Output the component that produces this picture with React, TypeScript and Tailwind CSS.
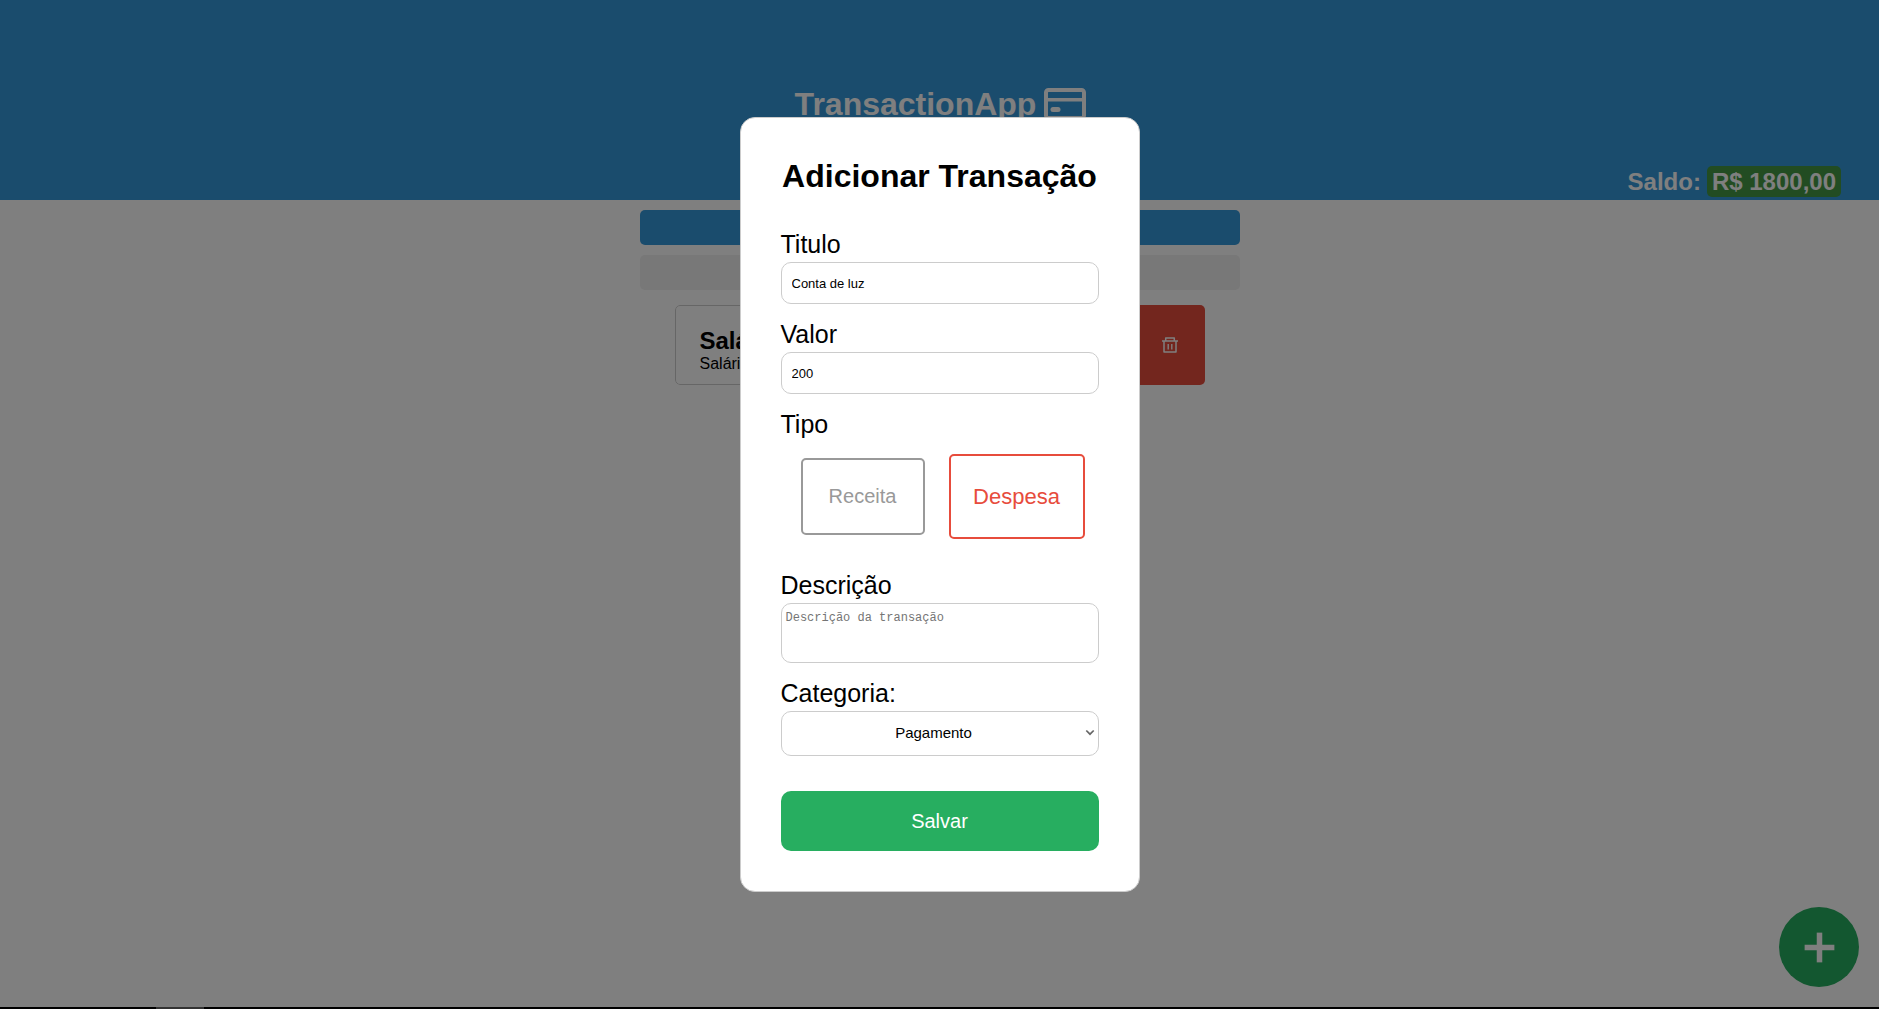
import { useState } from "react";
import { Plus } from "lucide-react";

const inputClass =
  "block w-full rounded-[10px] border border-[#ccc] bg-white";

const labelClass = "block text-[25px] leading-7";

function CardIcon() {
  return (
    <svg width="42" height="32" viewBox="0 0 42 32" fill="none" aria-hidden="true">
      <rect x="2" y="2" width="38" height="28" rx="2.5" stroke="white" strokeWidth="4" />
      <path d="M2 11.7H40" stroke="white" strokeWidth="3.6" />
      <path d="M9 21.5H14" stroke="white" strokeWidth="5" strokeLinecap="round" />
    </svg>
  );
}

function TrashIcon() {
  return (
    <svg width="16" height="16" viewBox="0 0 16 16" fill="none" stroke="white" aria-hidden="true">
      <path d="M0 4H16M3.7 4V1H12.3V4M2 4V15H14V4" strokeWidth="1.5" strokeLinejoin="round" />
      <path d="M6.2 7V12.5M9.8 7V12.5" strokeWidth="1.4" />
    </svg>
  );
}

function Page() {
  return (
    <>
      <header className="flex h-[200px] flex-col justify-end bg-[#3498db] text-white">
        <h1 className="flex items-center justify-center gap-2 pb-[42px] pl-[2px] text-[32px] leading-9 font-bold">
          TransactionApp
          <CardIcon />
        </h1>
        <p className="flex h-9 items-center justify-end gap-[6px] pr-[38px] pb-[1px] text-2xl font-bold">
          Saldo:
          <span className="rounded-[5px] bg-[#449944] px-[5px] py-[2px] leading-[27px]">R$ 1800,00</span>
        </p>
      </header>
      <main className="mx-auto flex w-full max-w-[600px] flex-col gap-[10px] pt-[10px]">
        <div className="h-[35px] rounded-[5px] bg-[#3498db]" />
        <div className="h-[35px] rounded-[5px] bg-[#f0f0f0]" />
        <article className="mx-[35px] mt-[5px] flex h-20 overflow-hidden rounded-[5px]">
          <div className="flex-1 rounded-l-[5px] border border-[#ccc] pt-5 pl-6">
            <h2 className="text-2xl leading-[29px] font-bold">Salário</h2>
            <p className="text-base leading-[18px]">Salário</p>
          </div>
          <button type="button" aria-label="Excluir" className="flex w-[70px] items-center justify-center bg-[#e74c3c]">
            <TrashIcon />
          </button>
        </article>
      </main>
      <button
        type="button"
        aria-label="Adicionar"
        className="fixed right-5 bottom-[22px] flex size-20 items-center justify-center rounded-full bg-[#27ae60] text-white"
      >
        <Plus size={51} strokeWidth={2.6} strokeLinecap="butt" />
      </button>
    </>
  );
}

function TransactionForm() {
  const [kind, setKind] = useState("despesa");
  const idle = "h-[77px] w-[124px] border-[#999] text-xl text-[#999]";
  return (
    <form className="w-[400px] rounded-[15px] border border-[#ccc] bg-white p-10" onSubmit={(e) => e.preventDefault()}>
      <h2 className="mb-9 text-center text-[32px] leading-9 font-bold whitespace-nowrap">Adicionar Transação</h2>
      <label htmlFor="titulo" className={labelClass}>Titulo</label>
      <input id="titulo" defaultValue="Conta de luz" className={`${inputClass} mt-1 h-[42px] px-[10px] text-[13px]`} />
      <label htmlFor="valor" className={`${labelClass} mt-4`}>Valor</label>
      <input id="valor" defaultValue="200" className={`${inputClass} mt-1 h-[42px] px-[10px] text-[13px]`} />
      <fieldset>
        <legend className={`${labelClass} pt-4`}>Tipo</legend>
        <div className="mt-[15px] flex h-[86px] items-center justify-center gap-6 pl-[6px]">
          <button
            type="button"
            onClick={() => setKind("receita")}
            className={`rounded-[5px] border-2 ${kind === "receita" ? "h-[85px] w-[136px] border-[#27ae60] text-[22px] text-[#27ae60]" : idle}`}
          >
            Receita
          </button>
          <button
            type="button"
            onClick={() => setKind("despesa")}
            className={`rounded-[5px] border-2 ${kind === "despesa" ? "h-[85px] w-[136px] border-[#e74c3c] text-[22px] text-[#e74c3c]" : idle}`}
          >
            Despesa
          </button>
        </div>
      </fieldset>
      <label htmlFor="descricao" className={`${labelClass} mt-8`}>Descrição</label>
      <textarea
        id="descricao"
        placeholder="Descrição da transação"
        className={`${inputClass} mt-1 h-[60px] resize-none px-1 pt-[6px] font-['Liberation_Mono',monospace] text-xs placeholder:text-[#757575]`}
      />
      <label htmlFor="categoria" className={`${labelClass} mt-4`}>Categoria:</label>
      <div className="relative mt-1">
        <select id="categoria" className={`${inputClass} h-[45px] appearance-none pr-3 text-center text-[15px]`}>
          <option>Pagamento</option>
          <option>Salário</option>
        </select>
        <svg className="pointer-events-none absolute top-[18px] right-1" width="10" height="7" viewBox="0 0 10 7" fill="none" aria-hidden="true">
          <path d="M1.3 1.5L5 5.2L8.7 1.5" stroke="#666" strokeWidth="1.7" />
        </svg>
      </div>
      <button type="submit" className="mt-[35px] h-[60px] w-full rounded-[10px] bg-[#27ae60] text-xl text-white">
        Salvar
      </button>
    </form>
  );
}

export default function App() {
  return (
    <div className="min-h-screen bg-white font-['Liberation_Sans',Arial,sans-serif] text-black">
      <Page />
      <div role="dialog" aria-modal="true" className="fixed inset-0 flex items-center justify-center bg-black/50">
        <TransactionForm />
      </div>
      <footer className="fixed inset-x-0 bottom-0 h-[2px] bg-black pl-[156px]">
        <div className="h-full w-12 bg-[#333]" />
      </footer>
    </div>
  );
}
